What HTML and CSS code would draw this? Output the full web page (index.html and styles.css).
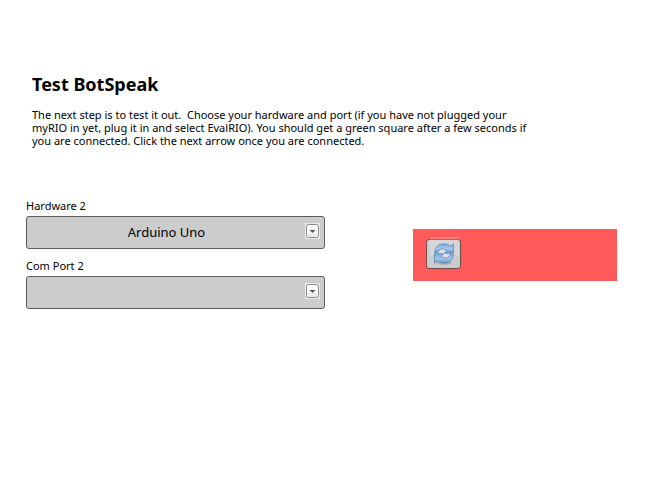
FILE: index.html
```html
<!DOCTYPE html>
<html lang="en">
<head>
<meta charset="utf-8">
<title>Test BotSpeak</title>
<link rel="stylesheet" href="styles.css">
</head>
<body>
<main class="page">
  <header class="intro">
    <h1 class="title">Test BotSpeak</h1>
    <p class="text">The next step is to test it out.&nbsp; Choose your hardware and port (if you have not plugged your<br>
      myRIO in yet, plug it in and select EvalRIO). You should get a green square after a few seconds if<br>
      you are connected. Click the next arrow once you are connected.</p>
  </header>
  <div class="panel">
    <form class="form">
      <div class="field">
        <label class="label" for="hardware">Hardware 2</label>
        <div class="control">
          <select class="select" id="hardware"><option>Arduino Uno</option></select>
          <svg class="arrow" viewBox="0 0 15 16" aria-hidden="true">
            <rect width="15" height="16" fill="#e9e9e9"/>
            <rect x="1.5" y="1.5" width="12" height="13" rx="2" fill="#fafafa" stroke="#8a8a8a"/>
            <path d="M3 10h9v4H3z" fill="#ececec"/>
            <path d="M4.500 7h6L7.500 10z" fill="#555"/>
          </svg>
        </div>
      </div>
      <div class="field">
        <label class="label" for="port">Com Port 2</label>
        <div class="control">
          <select class="select" id="port"><option></option></select>
          <svg class="arrow" viewBox="0 0 15 16" aria-hidden="true">
            <rect width="15" height="16" fill="#e9e9e9"/>
            <rect x="1.5" y="1.5" width="12" height="13" rx="2" fill="#fafafa" stroke="#8a8a8a"/>
            <path d="M3 10h9v4H3z" fill="#ececec"/>
            <path d="M4.500 7h6L7.500 10z" fill="#555"/>
          </svg>
        </div>
      </div>
    </form>
    <div class="status">
      <button class="refresh" type="button" aria-label="Refresh">
        <svg class="icon" viewBox="0 0 22 22" aria-hidden="true">
          <defs>
            <linearGradient id="blue" x1="0" y1="0" x2="0" y2="1">
              <stop offset="0" stop-color="#78a5d8"/>
              <stop offset=".5" stop-color="#a3c6ec"/>
              <stop offset="1" stop-color="#6693c9"/>
            </linearGradient>
          </defs>
          <ellipse cx="11" cy="20" rx="8" ry="2" fill="#999" opacity=".45"/>
          <ellipse cx="11" cy="10.500" rx="6" ry="4.500" fill="#dedede"/>
          <g fill="url(#blue)" stroke="#5484bb" stroke-width=".7" stroke-linejoin="round">
            <path d="M1.500 9.500C2 4 6 .8 10.500.8c3 0 5 .8 6.600 2.300L20.500 1v9.200h-9.200l2.500-2.500C11.500 5.700 9 5.300 7.200 6.500 6 7.300 5.200 8.500 5 9.500z"/>
            <path d="M20.500 11.500C20 17 16 20.200 11.500 20.200c-3 0-5-.8-6.600-2.300L1.500 20v-9.200h9.200l-2.500 2.500c2.300 2 4.800 2.400 6.600 1.200 1.200-.8 2-2 2.200-3z"/>
          </g>
        </svg>
      </button>
    </div>
  </div>
</main>
</body>
</html>
```

FILE: styles.css
```css
body {
  margin: 0;
  background: #fff;
  color: #000;
  font-family: "Noto Sans", "Open Sans", sans-serif;
  font-size: 11px;
  line-height: 13px;
}

.page {
  padding: 72px 48px 24px 26px;
}

.intro {
  padding-left: 6px;
}

.title {
  margin: 0 0 12px;
  font-size: 18px;
  line-height: 24px;
  font-weight: 700;
}

.text {
  margin: 0;
}

.panel {
  display: grid;
  grid-template-columns: 299fr 204fr;
  align-items: start;
  gap: 88px;
  margin-top: 52px;
}

.form {
  display: grid;
  gap: 10px;
}

.label {
  display: block;
  margin-bottom: 4px;
}

.control {
  position: relative;
}

.select {
  display: block;
  appearance: none;
  box-sizing: border-box;
  width: 100%;
  height: 33px;
  margin: 0;
  padding: 0 18px 1px 0;
  border: 1px solid #5c5c5c;
  border-radius: 3px;
  background: #ccc;
  color: #000;
  font: 13px/18px "Noto Sans", "Open Sans", sans-serif;
  text-align: center;
  text-align-last: center;
}

.arrow {
  position: absolute;
  top: 7px;
  right: 5px;
  width: 15px;
  height: 16px;
  pointer-events: none;
}

.status {
  display: flex;
  margin-top: 30px;
  padding: 10px 13px 12px;
  background: #ff5a5a;
}

.refresh {
  position: relative;
  display: grid;
  place-items: center;
  box-sizing: border-box;
  width: 35px;
  height: 30px;
  padding: 0;
  border: 1px solid #714b4b;
  border-radius: 3px;
  background: #ccc;
}

.refresh::before {
  content: "";
  position: absolute;
  top: -3px;
  left: 3px;
  width: 29px;
  height: 18px;
  background: rgba(255, 255, 255, 0.2);
}

.icon {
  position: relative;
  width: 22px;
  height: 22px;
}
```
